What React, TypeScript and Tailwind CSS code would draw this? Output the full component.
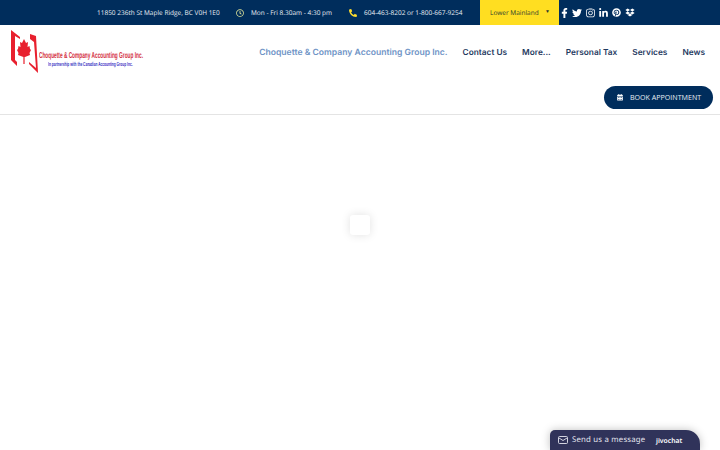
import { FaCalendarAlt, FaDropbox, FaFacebookF, FaInstagram, FaLinkedinIn, FaPhoneAlt, FaPinterest, FaRegClock, FaTwitter } from 'react-icons/fa';

const navItems = ['Contact Us', 'More...', 'Personal Tax', 'Services', 'News'];

function Logo() {
  return (
    <div className="flex items-start">
      <svg width="29" height="45" viewBox="0 0 29 45" className="shrink-0">
        <path d="M1 1 L10 8 L10 10 L5 7 L5 31 L7 33 L7 37 L1 31 Z" fill="#e8202e" />
        <path d="M20 5 L26 7 L28 44 L19 35 L19 33 L26 39 L24 13 L20 10 Z" fill="#e8202e" />
        <path d="M14 10 L16 14 L18 13 L17.5 18 L19.5 17 L20 20 L21 21 L19.5 24 L20 26 L15 28 L14.6 28 L14.6 35 L13.4 35 L13.4 28 L8 26 L8.5 24 L7 21 L8 20 L8.5 17 L10.5 18 L10 13 L12 14 Z" fill="#e8202e" />
      </svg>
      <div className="mt-[22px] flex w-[103px] flex-col items-start">
        <span className="origin-left scale-x-[0.555] whitespace-nowrap font-['Liberation_Sans',sans-serif] text-[8.6px] leading-[9px] font-bold text-[#d3313f]">
          Choquette &amp; Company Accounting Group Inc.
        </span>
        <span className="ml-[9px] mt-[2px] origin-left scale-x-[0.55] whitespace-nowrap font-['Liberation_Sans',sans-serif] text-[5.8px] leading-[6px] font-bold text-[#3b33c4]">
          In partnership with the Canadian Accounting Group Inc.
        </span>
      </div>
    </div>
  );
}

export default function App() {
  return (
    <div className="relative h-[450px] w-[720px] overflow-hidden bg-white font-['Open_Sans',sans-serif] [text-rendering:geometricPrecision]">
      {/* Top bar */}
      <div className="flex h-[25px] items-center bg-[#002d5c] pl-[97px] text-[6.5px] text-[#e8edf3]">
        <span className="w-[122px] whitespace-nowrap">11850 236th St Maple Ridge, BC V0H 1E0</span>
        <FaRegClock className="ml-[17px] h-[8px] w-[8px] text-[#dfe59a]" />
        <span className="ml-[7px] w-[81px] whitespace-nowrap">Mon - Fri 8.30am - 4:30 pm</span>
        <FaPhoneAlt className="ml-[17px] h-[8px] w-[8px] text-[#ffdd2d]" />
        <span className="ml-[7px] w-[99px] whitespace-nowrap">604-463-8202 or 1-800-667-9254</span>
        <div className="ml-[17px] flex h-full w-[79px] items-center justify-between bg-[#ffde21] pl-[10px] pr-[9px] text-[#2b3a2f]">
          <span className="whitespace-nowrap">Lower Mainland</span>
          <span className="pt-[1px] text-[5px]">▼</span>
        </div>
        <div className="ml-[2px] flex items-center gap-[4px] text-white">
          <FaFacebookF className="h-[10px] w-[7px]" />
          <FaTwitter className="h-[10px] w-[10px]" />
          <FaInstagram className="h-[10px] w-[9px]" />
          <FaLinkedinIn className="h-[10px] w-[9px]" />
          <FaPinterest className="h-[9px] w-[9px]" />
          <FaDropbox className="h-[9px] w-[10px]" />
        </div>
      </div>

      {/* Header */}
      <div className="h-[90px] border-b border-[#e4e4e4] bg-white">
        <div className="flex items-start justify-between pl-[10px] pr-[15px] pt-[4px]">
          <Logo />
          <nav className="mt-[17px] flex items-center gap-[15px] font-['Inter',sans-serif] text-[8.3px] leading-[14px] font-semibold text-[#1f3a5f]">
            <a className="whitespace-nowrap text-[8.6px] text-[#6f94c6]">Choquette &amp; Company Accounting Group Inc.</a>
            {navItems.map((item) => (
              <a key={item} className="whitespace-nowrap">
                {item}
              </a>
            ))}
          </nav>
        </div>
        <div className="mt-[12px] flex justify-end pr-[7px]">
          <button className="flex h-[23px] w-[109px] items-center rounded-full bg-[#002d5c] pl-[13px] text-[7.1px] text-[#e8edf3]">
            <FaCalendarAlt className="h-[6.5px] w-[6px] text-white" />
            <span className="ml-[7px] whitespace-nowrap">BOOK APPOINTMENT</span>
          </button>
        </div>
      </div>

      {/* Preloader */}
      <div className="absolute left-[350px] top-[215px] h-5 w-5 rounded-[3px] bg-white shadow-[0_0_10px_rgba(0,0,0,0.12)]" />

      {/* Chat widget */}
      <div className="absolute bottom-0 left-[550px] flex h-5 w-[150px] items-center rounded-tl-[5px] rounded-tr-[14px] bg-[#30335a] pl-[8px] font-['Noto_Sans',sans-serif] text-[#e4e5ee] shadow-[0_0_8px_rgba(0,0,0,0.25)]">
        <svg width="10" height="8" viewBox="0 0 10 8" fill="none" stroke="currentColor" strokeWidth="0.9">
          <rect x="0.5" y="0.5" width="9" height="7" rx="1" />
          <path d="M1 2 L5 4.5 L9 2" />
        </svg>
        <span className="ml-[4px] w-[73px] whitespace-nowrap pt-[2px] text-[7.8px] tracking-[0.2px]">Send us a message</span>
        <span className="ml-[11px] whitespace-nowrap pt-[2px] text-[6.8px] font-semibold text-white">jivochat</span>
      </div>
    </div>
  );
}
